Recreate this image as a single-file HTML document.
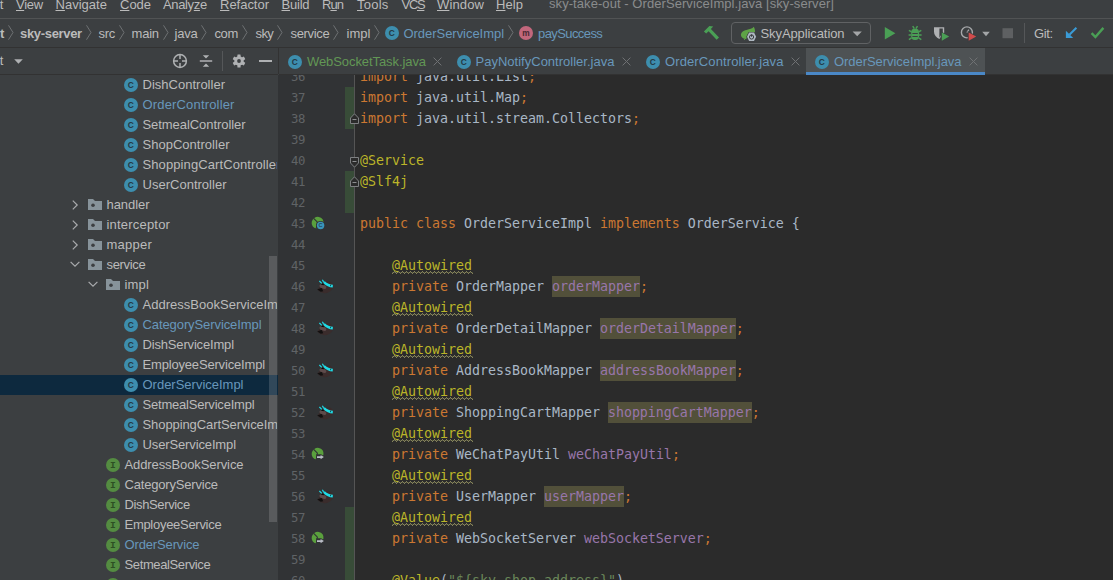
<!DOCTYPE html>
<html lang="en">
<head>
<meta charset="utf-8">
<title>sky-take-out - OrderServiceImpl.java [sky-server]</title>
<style>
*{box-sizing:border-box;margin:0;padding:0}
html,body{width:1113px;height:580px;overflow:hidden;background:#3c3f41}
body{position:relative;font-family:"Liberation Sans",sans-serif;font-size:13px;color:#bbbbbb}
.abs{position:absolute}
/* menu bar */
#menubar{left:0;top:0;width:1113px;height:18px;background:#3c3f41;overflow:hidden}
#menubar span{position:absolute;top:-4.5px;line-height:18px;font-size:13px;color:#bbbbbb;white-space:nowrap}
#menubar u{text-decoration:underline;text-underline-offset:1px}
#menubar .title{color:#8a8c8d;top:-5.4px}
#menuline{left:0;top:18px;width:1113px;height:1px;background:#515354}
/* nav bar */
#navbar{left:0;top:19px;width:1113px;height:28px;background:#3c3f41;overflow:hidden}
#navbar span{position:absolute;top:0.5px;line-height:28px;font-size:13px;color:#bbbbbb;white-space:nowrap}
#navbar .sep{color:#6e7073}
#navbar .blue{color:#6897bb}
#navline{left:0;top:47px;width:1113px;height:1px;background:#323232}
/* project tool window */
#proj{left:0;top:48px;width:278px;height:532px;background:#3c3f41;overflow:hidden}
#projhead{left:0;top:0;width:278px;height:26px}
#projline{left:0;top:26px;width:278px;height:1px;background:#323232}
#tree{left:0;top:27px;width:278px;height:505px;overflow:hidden}
.row{position:absolute;left:0;width:277px;overflow:hidden;height:20px;line-height:20px;white-space:nowrap;font-size:13px;color:#bbbbbb}
.row.sel{background:#0d293e}
.row span{position:absolute;top:0}
.row .b{color:#6897bb}
.ico{position:absolute;top:3px;width:14px;height:14px}
#vsplit{left:278px;top:48px;width:1px;height:26px;background:#323232}
#tscroll{left:269px;top:255px;width:8px;height:266px;background:#5b5d5f}
/* editor tabs */
#tabs{left:279px;top:48px;width:834px;height:27px;overflow:hidden;z-index:2}
#tabsline{left:279px;top:74px;width:834px;height:1px;background:#323232}
.tabt{top:1px;height:26px;line-height:26px;font-size:13px;white-space:nowrap}
/* editor */
#gutter{left:278px;top:75px;width:77px;height:505px;background:#313335;overflow:hidden}
#gutline{left:354px;top:75px;width:1px;height:505px;background:#555555}
#editor{left:355px;top:75px;width:758px;height:505px;background:#2b2b2b;overflow:hidden}
.ln{position:absolute;left:0;width:27px;margin-top:0.5px;text-align:right;height:21px;line-height:21px;font-family:"DejaVu Sans Mono","Liberation Mono",monospace;font-size:12.3px;letter-spacing:-0.4px;color:#606366}
.cl{position:absolute;left:5px;height:21px;line-height:21px;font-family:"DejaVu Sans Mono","Liberation Mono",monospace;font-size:13.29px;color:#a9b7c6;white-space:pre}
.k{color:#cc7832}
.a{color:#bbb529}
.f{color:#9876aa}
.s{color:#6a8759}
.hl{background:#52503a;display:inline-block;height:21px;vertical-align:top}
.wv{text-decoration:underline wavy #7f7a3c;text-decoration-thickness:1px;text-underline-offset:2px}
.chg{position:absolute;left:67px;width:9px;background:#384c38}
#m1{letter-spacing:-0.272px}#m2{letter-spacing:0.025px}#m3{letter-spacing:-0.027px}#m4{letter-spacing:-0.349px}#m5{letter-spacing:-0.019px}#m6{letter-spacing:-0.205px}#m7{letter-spacing:-0.944px}#m8{letter-spacing:0.253px}#m9{letter-spacing:-1.294px}#m10{letter-spacing:0.136px}#m11{letter-spacing:0.071px}#mtitle{letter-spacing:0.067px}#n1{letter-spacing:-0.322px}#n2{letter-spacing:-0.338px}#n3{letter-spacing:-0.196px}#n4{letter-spacing:-0.246px}#n5{letter-spacing:-0.425px}#n6{letter-spacing:-0.6px}#n7{letter-spacing:-0.337px}#n8{letter-spacing:0.045px}#n9{letter-spacing:-0.041px}#n10{letter-spacing:-0.589px}#tb1{letter-spacing:-0.095px}#tb2{letter-spacing:-0.353px}#t0{letter-spacing:0.009px}#t1{letter-spacing:0.166px}#t2{letter-spacing:-0.063px}#t3{letter-spacing:0.021px}#t4{letter-spacing:0.1px}#t5{letter-spacing:0.014px}#t6{letter-spacing:-0.058px}#t7{letter-spacing:0.198px}#t8{letter-spacing:0.259px}#t9{letter-spacing:-0.337px}#t10{letter-spacing:0.188px}#t11{letter-spacing:0.012px}#t12{letter-spacing:-0.09px}#t13{letter-spacing:-0.167px}#t14{letter-spacing:-0.174px}#t15{letter-spacing:-0.009px}#t16{letter-spacing:-0.206px}#t17{letter-spacing:-0.085px}#t18{letter-spacing:-0.128px}#t19{letter-spacing:-0.096px}#t20{letter-spacing:-0.18px}#t21{letter-spacing:-0.368px}#t22{letter-spacing:-0.287px}#t23{letter-spacing:-0.137px}#t24{letter-spacing:-0.374px}#t25{letter-spacing:-0.072px}#tab0{letter-spacing:-0.082px}#tab1{letter-spacing:0.011px}#tab2{letter-spacing:0.111px}#tab3{letter-spacing:-0.054px}
</style>
</head>
<body>
<div id="menubar" class="abs"><span id="m0" style="right:1109.6px;"><u>E</u>dit</span><span id="m1" style="left:16px;"><u>V</u>iew</span><span id="m2" style="left:55.5px;"><u>N</u>avigate</span><span id="m3" style="left:120px;"><u>C</u>ode</span><span id="m4" style="left:163px;">Analy<u>z</u>e</span><span id="m5" style="left:220px;"><u>R</u>efactor</span><span id="m6" style="left:281.5px;"><u>B</u>uild</span><span id="m7" style="left:322px;">R<u>u</u>n</span><span id="m8" style="left:357px;"><u>T</u>ools</span><span id="m9" style="left:401.5px;">VC<u>S</u></span><span id="m10" style="left:437px;"><u>W</u>indow</span><span id="m11" style="left:496px;"><u>H</u>elp</span><span id="mtitle" class="title" style="left:549px;">sky-take-out - OrderServiceImpl.java [sky-server]</span></div>
<div id="menuline" class="abs"></div>
<div id="navbar" class="abs"><span id="n0" style="right:1108.7px;font-weight:bold;">sky-take-out</span><svg class="abs" style="left:7.8px;top:6px" width="6" height="15" viewBox="0 0 6 15"><path d="M0.5 0.3L5 7.5L0.5 14.7" fill="none" stroke="#6e7173" stroke-width="1"/></svg><span id="n1" style="left:20px;font-weight:bold;">sky-server</span><svg class="abs" style="left:85.6px;top:6px" width="6" height="15" viewBox="0 0 6 15"><path d="M0.5 0.3L5 7.5L0.5 14.7" fill="none" stroke="#6e7173" stroke-width="1"/></svg><span id="n2" style="left:98.5px;">src</span><svg class="abs" style="left:118.6px;top:6px" width="6" height="15" viewBox="0 0 6 15"><path d="M0.5 0.3L5 7.5L0.5 14.7" fill="none" stroke="#6e7173" stroke-width="1"/></svg><span id="n3" style="left:131.5px;">main</span><svg class="abs" style="left:162.6px;top:6px" width="6" height="15" viewBox="0 0 6 15"><path d="M0.5 0.3L5 7.5L0.5 14.7" fill="none" stroke="#6e7173" stroke-width="1"/></svg><span id="n4" style="left:174.5px;">java</span><svg class="abs" style="left:201.1px;top:6px" width="6" height="15" viewBox="0 0 6 15"><path d="M0.5 0.3L5 7.5L0.5 14.7" fill="none" stroke="#6e7173" stroke-width="1"/></svg><span id="n5" style="left:214.5px;">com</span><svg class="abs" style="left:242.4px;top:6px" width="6" height="15" viewBox="0 0 6 15"><path d="M0.5 0.3L5 7.5L0.5 14.7" fill="none" stroke="#6e7173" stroke-width="1"/></svg><span id="n6" style="left:255.5px;">sky</span><svg class="abs" style="left:277.1px;top:6px" width="6" height="15" viewBox="0 0 6 15"><path d="M0.5 0.3L5 7.5L0.5 14.7" fill="none" stroke="#6e7173" stroke-width="1"/></svg><span id="n7" style="left:290.5px;">service</span><svg class="abs" style="left:333.2px;top:6px" width="6" height="15" viewBox="0 0 6 15"><path d="M0.5 0.3L5 7.5L0.5 14.7" fill="none" stroke="#6e7173" stroke-width="1"/></svg><span id="n8" style="left:346.5px;">impl</span><svg class="abs" style="left:374.3px;top:6px" width="6" height="15" viewBox="0 0 6 15"><path d="M0.5 0.3L5 7.5L0.5 14.7" fill="none" stroke="#6e7173" stroke-width="1"/></svg><svg class="abs" style="left:385px;top:6.5px" width="14" height="14" viewBox="0 0 14 14"><circle cx="7" cy="7" r="7" fill="#3d8eae"/><text x="6.9" y="9.9" text-anchor="middle" font-family="Liberation Sans, sans-serif" font-size="8.4" font-weight="bold" fill="#243945">C</text></svg><span id="n9" class="blue" style="left:403.5px;">OrderServiceImpl</span><svg class="abs" style="left:508px;top:6px" width="6" height="15" viewBox="0 0 6 15"><path d="M0.5 0.3L5 7.5L0.5 14.7" fill="none" stroke="#6e7173" stroke-width="1"/></svg><svg class="abs" style="left:519px;top:6.5px" width="14" height="14" viewBox="0 0 14 14"><circle cx="7" cy="7" r="7" fill="#c2677c"/><text x="6.9" y="9.9" text-anchor="middle" font-family="Liberation Sans, sans-serif" font-size="8.4" font-weight="bold" fill="#4a2a33">m</text></svg><span id="n10" class="blue" style="left:538px;">paySuccess</span><svg class="abs" style="left:690px;top:0" width="423" height="28" viewBox="690 19 423 28"><path d="M703.9 31.5L709.4 26L713.2 26.4L710.9 29.1L719 37.4L716.6 39.8L708.6 31.2L706.2 33.4z" fill="#4a9f55"/><rect x="731.5" y="22.5" width="139" height="21" rx="3.5" fill="none" stroke="#606264" stroke-width="1"/><path d="M741 35.6C740.5 32.6 743 30.7 746.5 29.9C749.8 29.2 752.3 28.9 753.8 26.8C755.3 29.4 755.3 32.2 754.6 33.4L748 33.6L746.6 38.4C744.8 39 743.4 38.5 742.4 37.7C741.6 37.1 741.2 36.5 741 35.6z" fill="#5ea347"/><path d="M746.4 37.8L744 39.7" stroke="#5ea347" stroke-width="1" fill="none"/><path d="M746.2 36.8L748.7 31.9H754.4L756.9 36.8L754.4 41.7H748.7z" fill="#3c3f41"/><path d="M747 36.8L749.1 32.6H754L756.1 36.8L754 41H749.1z" fill="#aeb8c2"/><circle cx="751.55" cy="37" r="2.1" fill="none" stroke="#3c3f41" stroke-width="1"/><path d="M751.55 34.2v2.6" stroke="#3c3f41" stroke-width="1.1"/><path d="M750.5 34.6h2.1" stroke="#aeb8c2" stroke-width="0.1"/><path d="M852.6 31.4h9.2L857.2 36.2z" fill="#a4a6a8"/><path d="M884.8 27L895.4 33.3L884.8 39.6z" fill="#4a9f55"/><rect x="911.2" y="28.8" width="7.8" height="11.2" rx="3.4" fill="#4a9f55"/><path d="M912.7 26.1l1.6 2.5M917.5 26.1l-1.6 2.5M908.9 30.4l2.6 1.5M921.3 30.4l-2.6 1.5M908.6 34.9h2.8M921.6 34.9h-2.8M908.9 39.6l2.6-1.7M921.3 39.6l-2.6-1.7" stroke="#4a9f55" stroke-width="1.5" fill="none"/><path d="M912.4 33.5h5.4M912.4 36.5h5.4" stroke="#3c3f41" stroke-width="1"/><path d="M934 27.2h10.2v5L939.4 39C936.2 37.6 934 35.2 934 31.8z" fill="#afb1b3"/><path d="M939.4 28.6h3.4v3.6l-3.4 5.6z" fill="#3c3f41"/><path d="M940.8 31.2l9.4 5.2-9.4 5.4z" fill="#3c3f41"/><path d="M941.8 32.6l7.4 4-7.4 4.2z" fill="#4a9f55"/><circle cx="966.9" cy="32.4" r="5.5" fill="none" stroke="#a6a8aa" stroke-width="1.4"/><path d="M966.9 32.6l2-3" stroke="#a6a8aa" stroke-width="1.2" fill="none"/><path d="M967.7 31l9.8 5.6-9.8 5.6z" fill="#3c3f41"/><path d="M968.7 32.6l7.5 4-7.5 4.2z" fill="#d04b4b"/><path d="M982.2 31.8h7.6L986 36.2z" fill="#a4a6a8"/><rect x="1002.5" y="28.2" width="10.5" height="10" fill="#5e6062"/><rect x="1024" y="23" width="1" height="20" fill="#555759"/><path d="M1076.4 27.7L1069.4 34.8" stroke="#3a9bd6" stroke-width="2" fill="none"/><path d="M1065.9 30.8V38H1073.2z" fill="#3a9bd6"/><path d="M1091.6 33.2L1095.4 37L1103.4 27.9" stroke="#4a9f55" stroke-width="2.4" fill="none"/></svg><span id="tb1" style="left:760.5px;">SkyApplication</span><span id="tb2" style="left:1034px;">Git:</span></div>
<div id="navline" class="abs"></div>
<div id="proj" class="abs">
  <div id="projhead" class="abs"><span id="ph0" style="right:274.6px;top:0;line-height:26px;position:absolute;font-size:13px;">Project</span><svg class="abs" style="left:13.5px;top:11px" width="9" height="5" viewBox="0 0 9 5"><path d="M0.2 0.2h8.6L4.5 4.8z" fill="#afb1b3"/></svg><svg class="abs" style="left:172px;top:5px" width="16" height="16" viewBox="0 0 16 16"><circle cx="8" cy="8" r="6.4" fill="none" stroke="#afb1b3" stroke-width="1.5"/><path d="M8 1.6V6M8 10V14.4M1.6 8H6M10 8H14.4" stroke="#afb1b3" stroke-width="1.5"/></svg><svg class="abs" style="left:199px;top:6px" width="14" height="14" viewBox="0 0 14 14"><path d="M0.8 7h12.4" stroke="#afb1b3" stroke-width="1.5"/><path d="M3.8 1.2h6.4L7 4.4z M3.8 12.8h6.4L7 9.6z" fill="#afb1b3"/></svg><div class="abs" style="left:222px;top:3px;width:1px;height:20px;background:#555759"></div><svg class="abs" style="left:232px;top:6px" width="14" height="14" viewBox="0 0 14 14"><g fill="#afb1b3"><circle cx="7" cy="7" r="4.7"/><rect x="5.4" y="0.6" width="3.2" height="3.4" rx="0.5" transform="rotate(0 7 7)"/><rect x="5.4" y="0.6" width="3.2" height="3.4" rx="0.5" transform="rotate(60 7 7)"/><rect x="5.4" y="0.6" width="3.2" height="3.4" rx="0.5" transform="rotate(120 7 7)"/><rect x="5.4" y="0.6" width="3.2" height="3.4" rx="0.5" transform="rotate(180 7 7)"/><rect x="5.4" y="0.6" width="3.2" height="3.4" rx="0.5" transform="rotate(240 7 7)"/><rect x="5.4" y="0.6" width="3.2" height="3.4" rx="0.5" transform="rotate(300 7 7)"/></g><circle cx="7" cy="7" r="1.9" fill="#3c3f41"/></svg><div class="abs" style="left:258.5px;top:11.7px;width:13px;height:2.6px;background:#afb1b3"></div></div>
  <div id="projline" class="abs"></div>
  <div id="tree" class="abs"><div class="abs" style="left:0;top:300px;width:278px;height:20px;background:#0d293e"></div><div class="abs" style="left:269px;top:180.5px;width:8px;height:266.5px;background:rgba(255,255,255,0.15)"></div><div class="row" style="top:0px"><svg class="abs" style="left:124px;top:3px" width="14" height="14" viewBox="0 0 14 14"><circle cx="7" cy="7" r="7" fill="#3d8eae"/><text x="6.9" y="9.9" text-anchor="middle" font-family="Liberation Sans, sans-serif" font-size="8.4" font-weight="bold" fill="#243945">C</text></svg><span id="t0" class="" style="left:142.5px">DishController</span></div><div class="row" style="top:20px"><svg class="abs" style="left:124px;top:3px" width="14" height="14" viewBox="0 0 14 14"><circle cx="7" cy="7" r="7" fill="#3d8eae"/><text x="6.9" y="9.9" text-anchor="middle" font-family="Liberation Sans, sans-serif" font-size="8.4" font-weight="bold" fill="#243945">C</text></svg><span id="t1" class="b" style="left:142.5px">OrderController</span></div><div class="row" style="top:40px"><svg class="abs" style="left:124px;top:3px" width="14" height="14" viewBox="0 0 14 14"><circle cx="7" cy="7" r="7" fill="#3d8eae"/><text x="6.9" y="9.9" text-anchor="middle" font-family="Liberation Sans, sans-serif" font-size="8.4" font-weight="bold" fill="#243945">C</text></svg><span id="t2" class="" style="left:142.5px">SetmealController</span></div><div class="row" style="top:60px"><svg class="abs" style="left:124px;top:3px" width="14" height="14" viewBox="0 0 14 14"><circle cx="7" cy="7" r="7" fill="#3d8eae"/><text x="6.9" y="9.9" text-anchor="middle" font-family="Liberation Sans, sans-serif" font-size="8.4" font-weight="bold" fill="#243945">C</text></svg><span id="t3" class="" style="left:142.5px">ShopController</span></div><div class="row" style="top:80px"><svg class="abs" style="left:124px;top:3px" width="14" height="14" viewBox="0 0 14 14"><circle cx="7" cy="7" r="7" fill="#3d8eae"/><text x="6.9" y="9.9" text-anchor="middle" font-family="Liberation Sans, sans-serif" font-size="8.4" font-weight="bold" fill="#243945">C</text></svg><span id="t4" class="" style="left:142.5px">ShoppingCartController</span></div><div class="row" style="top:100px"><svg class="abs" style="left:124px;top:3px" width="14" height="14" viewBox="0 0 14 14"><circle cx="7" cy="7" r="7" fill="#3d8eae"/><text x="6.9" y="9.9" text-anchor="middle" font-family="Liberation Sans, sans-serif" font-size="8.4" font-weight="bold" fill="#243945">C</text></svg><span id="t5" class="" style="left:142.5px">UserController</span></div><div class="row" style="top:120px"><svg class="abs" style="left:71.5px;top:4.5px" width="7" height="10" viewBox="0 0 7 10"><path d="M0.8 0.6L5.2 5L0.8 9.4" fill="none" stroke="#a9abad" stroke-width="1.2"/></svg><svg class="abs" style="left:88px;top:4px" width="14" height="11" viewBox="0 0 14 11"><path d="M0 0h5l2 2h7v9H0z" fill="#87939a"/><circle cx="5" cy="6.3" r="1.8" fill="#3c3f41"/></svg><span id="t6" class="" style="left:106.5px">handler</span></div><div class="row" style="top:140px"><svg class="abs" style="left:71.5px;top:4.5px" width="7" height="10" viewBox="0 0 7 10"><path d="M0.8 0.6L5.2 5L0.8 9.4" fill="none" stroke="#a9abad" stroke-width="1.2"/></svg><svg class="abs" style="left:88px;top:4px" width="14" height="11" viewBox="0 0 14 11"><path d="M0 0h5l2 2h7v9H0z" fill="#87939a"/><circle cx="5" cy="6.3" r="1.8" fill="#3c3f41"/></svg><span id="t7" class="" style="left:106.5px">interceptor</span></div><div class="row" style="top:160px"><svg class="abs" style="left:71.5px;top:4.5px" width="7" height="10" viewBox="0 0 7 10"><path d="M0.8 0.6L5.2 5L0.8 9.4" fill="none" stroke="#a9abad" stroke-width="1.2"/></svg><svg class="abs" style="left:88px;top:4px" width="14" height="11" viewBox="0 0 14 11"><path d="M0 0h5l2 2h7v9H0z" fill="#87939a"/><circle cx="5" cy="6.3" r="1.8" fill="#3c3f41"/></svg><span id="t8" class="" style="left:106.5px">mapper</span></div><div class="row" style="top:180px"><svg class="abs" style="left:69.5px;top:6px" width="10" height="7" viewBox="0 0 10 7"><path d="M0.6 0.8L5 5.2L9.4 0.8" fill="none" stroke="#a9abad" stroke-width="1.2"/></svg><svg class="abs" style="left:88px;top:4px" width="14" height="11" viewBox="0 0 14 11"><path d="M0 0h5l2 2h7v9H0z" fill="#87939a"/><circle cx="5" cy="6.3" r="1.8" fill="#3c3f41"/></svg><span id="t9" class="" style="left:106.5px">service</span></div><div class="row" style="top:200px"><svg class="abs" style="left:87.5px;top:6px" width="10" height="7" viewBox="0 0 10 7"><path d="M0.6 0.8L5 5.2L9.4 0.8" fill="none" stroke="#a9abad" stroke-width="1.2"/></svg><svg class="abs" style="left:106px;top:4px" width="14" height="11" viewBox="0 0 14 11"><path d="M0 0h5l2 2h7v9H0z" fill="#87939a"/><circle cx="5" cy="6.3" r="1.8" fill="#3c3f41"/></svg><span id="t10" class="" style="left:124.5px">impl</span></div><div class="row" style="top:220px"><svg class="abs" style="left:124px;top:3px" width="14" height="14" viewBox="0 0 14 14"><circle cx="7" cy="7" r="7" fill="#3d8eae"/><text x="6.9" y="9.9" text-anchor="middle" font-family="Liberation Sans, sans-serif" font-size="8.4" font-weight="bold" fill="#243945">C</text></svg><span id="t11" class="" style="left:142.5px">AddressBookServiceImpl</span></div><div class="row" style="top:240px"><svg class="abs" style="left:124px;top:3px" width="14" height="14" viewBox="0 0 14 14"><circle cx="7" cy="7" r="7" fill="#3d8eae"/><text x="6.9" y="9.9" text-anchor="middle" font-family="Liberation Sans, sans-serif" font-size="8.4" font-weight="bold" fill="#243945">C</text></svg><span id="t12" class="b" style="left:142.5px">CategoryServiceImpl</span></div><div class="row" style="top:260px"><svg class="abs" style="left:124px;top:3px" width="14" height="14" viewBox="0 0 14 14"><circle cx="7" cy="7" r="7" fill="#3d8eae"/><text x="6.9" y="9.9" text-anchor="middle" font-family="Liberation Sans, sans-serif" font-size="8.4" font-weight="bold" fill="#243945">C</text></svg><span id="t13" class="" style="left:142.5px">DishServiceImpl</span></div><div class="row" style="top:280px"><svg class="abs" style="left:124px;top:3px" width="14" height="14" viewBox="0 0 14 14"><circle cx="7" cy="7" r="7" fill="#3d8eae"/><text x="6.9" y="9.9" text-anchor="middle" font-family="Liberation Sans, sans-serif" font-size="8.4" font-weight="bold" fill="#243945">C</text></svg><span id="t14" class="" style="left:142.5px">EmployeeServiceImpl</span></div><div class="row" style="top:300px"><svg class="abs" style="left:124px;top:3px" width="14" height="14" viewBox="0 0 14 14"><circle cx="7" cy="7" r="7" fill="#3d8eae"/><text x="6.9" y="9.9" text-anchor="middle" font-family="Liberation Sans, sans-serif" font-size="8.4" font-weight="bold" fill="#243945">C</text></svg><span id="t15" class="b" style="left:142.5px">OrderServiceImpl</span></div><div class="row" style="top:320px"><svg class="abs" style="left:124px;top:3px" width="14" height="14" viewBox="0 0 14 14"><circle cx="7" cy="7" r="7" fill="#3d8eae"/><text x="6.9" y="9.9" text-anchor="middle" font-family="Liberation Sans, sans-serif" font-size="8.4" font-weight="bold" fill="#243945">C</text></svg><span id="t16" class="" style="left:142.5px">SetmealServiceImpl</span></div><div class="row" style="top:340px"><svg class="abs" style="left:124px;top:3px" width="14" height="14" viewBox="0 0 14 14"><circle cx="7" cy="7" r="7" fill="#3d8eae"/><text x="6.9" y="9.9" text-anchor="middle" font-family="Liberation Sans, sans-serif" font-size="8.4" font-weight="bold" fill="#243945">C</text></svg><span id="t17" class="" style="left:142.5px">ShoppingCartServiceImpl</span></div><div class="row" style="top:360px"><svg class="abs" style="left:124px;top:3px" width="14" height="14" viewBox="0 0 14 14"><circle cx="7" cy="7" r="7" fill="#3d8eae"/><text x="6.9" y="9.9" text-anchor="middle" font-family="Liberation Sans, sans-serif" font-size="8.4" font-weight="bold" fill="#243945">C</text></svg><span id="t18" class="" style="left:142.5px">UserServiceImpl</span></div><div class="row" style="top:380px"><svg class="abs" style="left:106px;top:3px" width="14" height="14" viewBox="0 0 14 14"><circle cx="7" cy="7" r="7" fill="#548c41"/><text x="7" y="9.9" text-anchor="middle" font-family="Liberation Mono, monospace" font-size="9.6" font-weight="bold" fill="#2c4f24">I</text></svg><span id="t19" class="" style="left:124.5px">AddressBookService</span></div><div class="row" style="top:400px"><svg class="abs" style="left:106px;top:3px" width="14" height="14" viewBox="0 0 14 14"><circle cx="7" cy="7" r="7" fill="#548c41"/><text x="7" y="9.9" text-anchor="middle" font-family="Liberation Mono, monospace" font-size="9.6" font-weight="bold" fill="#2c4f24">I</text></svg><span id="t20" class="" style="left:124.5px">CategoryService</span></div><div class="row" style="top:420px"><svg class="abs" style="left:106px;top:3px" width="14" height="14" viewBox="0 0 14 14"><circle cx="7" cy="7" r="7" fill="#548c41"/><text x="7" y="9.9" text-anchor="middle" font-family="Liberation Mono, monospace" font-size="9.6" font-weight="bold" fill="#2c4f24">I</text></svg><span id="t21" class="" style="left:124.5px">DishService</span></div><div class="row" style="top:440px"><svg class="abs" style="left:106px;top:3px" width="14" height="14" viewBox="0 0 14 14"><circle cx="7" cy="7" r="7" fill="#548c41"/><text x="7" y="9.9" text-anchor="middle" font-family="Liberation Mono, monospace" font-size="9.6" font-weight="bold" fill="#2c4f24">I</text></svg><span id="t22" class="" style="left:124.5px">EmployeeService</span></div><div class="row" style="top:460px"><svg class="abs" style="left:106px;top:3px" width="14" height="14" viewBox="0 0 14 14"><circle cx="7" cy="7" r="7" fill="#548c41"/><text x="7" y="9.9" text-anchor="middle" font-family="Liberation Mono, monospace" font-size="9.6" font-weight="bold" fill="#2c4f24">I</text></svg><span id="t23" class="b" style="left:124.5px">OrderService</span></div><div class="row" style="top:480px"><svg class="abs" style="left:106px;top:3px" width="14" height="14" viewBox="0 0 14 14"><circle cx="7" cy="7" r="7" fill="#548c41"/><text x="7" y="9.9" text-anchor="middle" font-family="Liberation Mono, monospace" font-size="9.6" font-weight="bold" fill="#2c4f24">I</text></svg><span id="t24" class="" style="left:124.5px">SetmealService</span></div><div class="row" style="top:500px"><svg class="abs" style="left:106px;top:3px" width="14" height="14" viewBox="0 0 14 14"><circle cx="7" cy="7" r="7" fill="#548c41"/><text x="7" y="9.9" text-anchor="middle" font-family="Liberation Mono, monospace" font-size="9.6" font-weight="bold" fill="#2c4f24">I</text></svg><span id="t25" class="" style="left:124.5px">ShoppingCartService</span></div></div>
</div>
<div id="vsplit" class="abs"></div>
<div id="tabs" class="abs"><svg class="abs" style="left:9px;top:7px" width="14" height="14" viewBox="0 0 14 14"><circle cx="7" cy="7" r="7" fill="#3d8eae"/><text x="6.9" y="9.9" text-anchor="middle" font-family="Liberation Sans, sans-serif" font-size="8.4" font-weight="bold" fill="#243945">C</text></svg><span id="tab0" class="abs tabt" style="left:28px;color:#629755">WebSocketTask.java</span><svg class="abs" style="left:154px;top:9px" width="9" height="9" viewBox="0 0 9 9"><path d="M0.6 0.6L8.4 8.4M8.4 0.6L0.6 8.4" stroke="#707274" stroke-width="1"/></svg><svg class="abs" style="left:178px;top:7px" width="14" height="14" viewBox="0 0 14 14"><circle cx="7" cy="7" r="7" fill="#3d8eae"/><text x="6.9" y="9.9" text-anchor="middle" font-family="Liberation Sans, sans-serif" font-size="8.4" font-weight="bold" fill="#243945">C</text></svg><span id="tab1" class="abs tabt" style="left:196.5px;color:#6897bb">PayNotifyController.java</span><svg class="abs" style="left:342.5px;top:9px" width="9" height="9" viewBox="0 0 9 9"><path d="M0.6 0.6L8.4 8.4M8.4 0.6L0.6 8.4" stroke="#707274" stroke-width="1"/></svg><svg class="abs" style="left:367px;top:7px" width="14" height="14" viewBox="0 0 14 14"><circle cx="7" cy="7" r="7" fill="#3d8eae"/><text x="6.9" y="9.9" text-anchor="middle" font-family="Liberation Sans, sans-serif" font-size="8.4" font-weight="bold" fill="#243945">C</text></svg><span id="tab2" class="abs tabt" style="left:386px;color:#6897bb">OrderController.java</span><svg class="abs" style="left:511.5px;top:9px" width="9" height="9" viewBox="0 0 9 9"><path d="M0.6 0.6L8.4 8.4M8.4 0.6L0.6 8.4" stroke="#707274" stroke-width="1"/></svg><div class="abs" style="left:527px;top:0;width:179px;height:26px;background:#4e5254"></div><div class="abs" style="left:527px;top:24px;width:179px;height:3px;background:#4a88c7"></div><svg class="abs" style="left:536px;top:7px" width="14" height="14" viewBox="0 0 14 14"><circle cx="7" cy="7" r="7" fill="#3d8eae"/><text x="6.9" y="9.9" text-anchor="middle" font-family="Liberation Sans, sans-serif" font-size="8.4" font-weight="bold" fill="#243945">C</text></svg><span id="tab3" class="abs tabt" style="left:555px;color:#6897bb">OrderServiceImpl.java</span><svg class="abs" style="left:689.5px;top:9px" width="9" height="9" viewBox="0 0 9 9"><path d="M0.6 0.6L8.4 8.4M8.4 0.6L0.6 8.4" stroke="#707274" stroke-width="1"/></svg></div>
<div id="tabsline" class="abs"></div>
<div id="gutter" class="abs"><div class="ln" style="top:-9px">36</div><div class="ln" style="top:12px">37</div><div class="ln" style="top:33px">38</div><div class="ln" style="top:54px">39</div><div class="ln" style="top:75px">40</div><div class="ln" style="top:96px">41</div><div class="ln" style="top:117px">42</div><div class="ln" style="top:138px">43</div><div class="ln" style="top:159px">44</div><div class="ln" style="top:180px">45</div><div class="ln" style="top:201px">46</div><div class="ln" style="top:222px">47</div><div class="ln" style="top:243px">48</div><div class="ln" style="top:264px">49</div><div class="ln" style="top:285px">50</div><div class="ln" style="top:306px">51</div><div class="ln" style="top:327px">52</div><div class="ln" style="top:348px">53</div><div class="ln" style="top:369px">54</div><div class="ln" style="top:390px">55</div><div class="ln" style="top:411px">56</div><div class="ln" style="top:432px">57</div><div class="ln" style="top:453px">58</div><div class="ln" style="top:474px">59</div><div class="ln" style="top:495px">60</div><div class="chg" style="top:12px;height:42px"></div><div class="chg" style="top:96px;height:42px"></div><div class="chg" style="top:432px;height:105px"></div></div>
<div id="gutline" class="abs"></div>
<div id="editor" class="abs"><div class="cl" style="top:-9px"><span class="k">import</span> java.util.List<span class="k">;</span></div><div class="cl" style="top:12px"><span class="k">import</span> java.util.Map<span class="k">;</span></div><div class="cl" style="top:33px"><span class="k">import</span> java.util.stream.Collectors<span class="k">;</span></div><div class="cl" style="top:54px"></div><div class="cl" style="top:75px"><span class="a">@Service</span></div><div class="cl" style="top:96px"><span class="a">@Slf4j</span></div><div class="cl" style="top:117px"></div><div class="cl" style="top:138px"><span class="k">public class</span> OrderServiceImpl <span class="k">implements</span> OrderService {</div><div class="cl" style="top:159px"></div><div class="cl" style="top:180px">    <span class="a">@Autowired</span></div><div class="cl" style="top:201px">    <span class="k">private</span> OrderMapper <span class="f hl">orderMapper</span><span class="k">;</span></div><div class="cl" style="top:222px">    <span class="a">@Autowired</span></div><div class="cl" style="top:243px">    <span class="k">private</span> OrderDetailMapper <span class="f hl">orderDetailMapper</span><span class="k">;</span></div><div class="cl" style="top:264px">    <span class="a">@Autowired</span></div><div class="cl" style="top:285px">    <span class="k">private</span> AddressBookMapper <span class="f hl">addressBookMapper</span><span class="k">;</span></div><div class="cl" style="top:306px">    <span class="a">@Autowired</span></div><div class="cl" style="top:327px">    <span class="k">private</span> ShoppingCartMapper <span class="f hl">shoppingCartMapper</span><span class="k">;</span></div><div class="cl" style="top:348px">    <span class="a">@Autowired</span></div><div class="cl" style="top:369px">    <span class="k">private</span> WeChatPayUtil <span class="f">weChatPayUtil</span><span class="k">;</span></div><div class="cl" style="top:390px">    <span class="a">@Autowired</span></div><div class="cl" style="top:411px">    <span class="k">private</span> UserMapper <span class="f hl">userMapper</span><span class="k">;</span></div><div class="cl" style="top:432px">    <span class="a">@Autowired</span></div><div class="cl" style="top:453px">    <span class="k">private</span> WebSocketServer <span class="f">webSocketServer</span><span class="k">;</span></div><div class="cl" style="top:474px"></div><div class="cl" style="top:495px">    <span class="a">@Value</span>(<span class="s">"${sky.shop.address}"</span>)</div></div>
<svg class="abs" style="left:350px;top:113px" width="10" height="11" viewBox="0 0 10 11"><path d="M0.5 5L4.5 0.8L8.5 5V10.5H0.5z" fill="#2b2b2b" stroke="#7e8082" stroke-width="1"/><path d="M2.5 6.5H6.5" stroke="#8c8e90" stroke-width="1"/></svg><svg class="abs" style="left:350px;top:156.5px" width="10" height="11" viewBox="0 0 10 11"><path d="M0.5 0.5H8.5V6L4.5 10.2L0.5 6z" fill="#2b2b2b" stroke="#7e8082" stroke-width="1"/><path d="M2.5 4.5H6.5" stroke="#8c8e90" stroke-width="1"/></svg><svg class="abs" style="left:350px;top:176px" width="10" height="11" viewBox="0 0 10 11"><path d="M0.5 5L4.5 0.8L8.5 5V10.5H0.5z" fill="#2b2b2b" stroke="#7e8082" stroke-width="1"/><path d="M2.5 6.5H6.5" stroke="#8c8e90" stroke-width="1"/></svg><svg class="abs" style="left:305px;top:75px" width="45" height="505" viewBox="305 75 45 505"><g transform="translate(0 213)"><ellipse cx="317.6" cy="9.7" rx="6.1" ry="5.7" transform="rotate(-35 317.6 9.7)" fill="#5aa03d"/><path d="M313.7 5.3L317.4 9.2L316.2 15.8" stroke="#313335" stroke-width="1.1" fill="none"/></g><g transform="translate(0 213)"><circle cx="320.6" cy="12.5" r="4.6" fill="#313335"/><circle cx="320.6" cy="12.5" r="3.7" fill="#3a95ba"/><text x="320.6" y="14.3" text-anchor="middle" font-family="Liberation Sans, sans-serif" font-size="5.6" font-weight="bold" fill="#27485a">C</text></g><g transform="translate(0 276)"><path d="M317.4 13.6C319.4 11 321.4 7.8 325.6 5.8C329.8 3.8 333.4 6.6 332.9 10.6C332.4 14.8 328.6 17.4 324.4 17.2C321.2 17.1 319.2 15.9 317.4 13.6z" fill="#3a2c2c"/><path d="M317.2 13.6l4.6-1.8 1.4 3.4-2.4.6z" fill="#121010"/><ellipse cx="322.9" cy="10.6" rx="3.6" ry="1.9" transform="rotate(22 322.9 10.6)" fill="#5e4b4b"/><path d="M321.4 8.1l2.4.5" stroke="#0c0b0b" stroke-width="1.2"/><path d="M323.4 6.9C326 9.8 329.4 11.3 332.7 11.6L332.9 8.7C330 8.4 327 7.5 324.8 5.2z" fill="#1fdbe6"/><path d="M319.4 5l2.4 2.4M322.4 3.8l1 1.8 1.6 1.4" stroke="#1fdbe6" stroke-width="1.2" fill="none"/><ellipse cx="330.6" cy="9.6" rx="0.5" ry="0.8" fill="#16363a"/></g><g transform="translate(0 318)"><path d="M317.4 13.6C319.4 11 321.4 7.8 325.6 5.8C329.8 3.8 333.4 6.6 332.9 10.6C332.4 14.8 328.6 17.4 324.4 17.2C321.2 17.1 319.2 15.9 317.4 13.6z" fill="#3a2c2c"/><path d="M317.2 13.6l4.6-1.8 1.4 3.4-2.4.6z" fill="#121010"/><ellipse cx="322.9" cy="10.6" rx="3.6" ry="1.9" transform="rotate(22 322.9 10.6)" fill="#5e4b4b"/><path d="M321.4 8.1l2.4.5" stroke="#0c0b0b" stroke-width="1.2"/><path d="M323.4 6.9C326 9.8 329.4 11.3 332.7 11.6L332.9 8.7C330 8.4 327 7.5 324.8 5.2z" fill="#1fdbe6"/><path d="M319.4 5l2.4 2.4M322.4 3.8l1 1.8 1.6 1.4" stroke="#1fdbe6" stroke-width="1.2" fill="none"/><ellipse cx="330.6" cy="9.6" rx="0.5" ry="0.8" fill="#16363a"/></g><g transform="translate(0 360)"><path d="M317.4 13.6C319.4 11 321.4 7.8 325.6 5.8C329.8 3.8 333.4 6.6 332.9 10.6C332.4 14.8 328.6 17.4 324.4 17.2C321.2 17.1 319.2 15.9 317.4 13.6z" fill="#3a2c2c"/><path d="M317.2 13.6l4.6-1.8 1.4 3.4-2.4.6z" fill="#121010"/><ellipse cx="322.9" cy="10.6" rx="3.6" ry="1.9" transform="rotate(22 322.9 10.6)" fill="#5e4b4b"/><path d="M321.4 8.1l2.4.5" stroke="#0c0b0b" stroke-width="1.2"/><path d="M323.4 6.9C326 9.8 329.4 11.3 332.7 11.6L332.9 8.7C330 8.4 327 7.5 324.8 5.2z" fill="#1fdbe6"/><path d="M319.4 5l2.4 2.4M322.4 3.8l1 1.8 1.6 1.4" stroke="#1fdbe6" stroke-width="1.2" fill="none"/><ellipse cx="330.6" cy="9.6" rx="0.5" ry="0.8" fill="#16363a"/></g><g transform="translate(0 402)"><path d="M317.4 13.6C319.4 11 321.4 7.8 325.6 5.8C329.8 3.8 333.4 6.6 332.9 10.6C332.4 14.8 328.6 17.4 324.4 17.2C321.2 17.1 319.2 15.9 317.4 13.6z" fill="#3a2c2c"/><path d="M317.2 13.6l4.6-1.8 1.4 3.4-2.4.6z" fill="#121010"/><ellipse cx="322.9" cy="10.6" rx="3.6" ry="1.9" transform="rotate(22 322.9 10.6)" fill="#5e4b4b"/><path d="M321.4 8.1l2.4.5" stroke="#0c0b0b" stroke-width="1.2"/><path d="M323.4 6.9C326 9.8 329.4 11.3 332.7 11.6L332.9 8.7C330 8.4 327 7.5 324.8 5.2z" fill="#1fdbe6"/><path d="M319.4 5l2.4 2.4M322.4 3.8l1 1.8 1.6 1.4" stroke="#1fdbe6" stroke-width="1.2" fill="none"/><ellipse cx="330.6" cy="9.6" rx="0.5" ry="0.8" fill="#16363a"/></g><g transform="translate(0 486)"><path d="M317.4 13.6C319.4 11 321.4 7.8 325.6 5.8C329.8 3.8 333.4 6.6 332.9 10.6C332.4 14.8 328.6 17.4 324.4 17.2C321.2 17.1 319.2 15.9 317.4 13.6z" fill="#3a2c2c"/><path d="M317.2 13.6l4.6-1.8 1.4 3.4-2.4.6z" fill="#121010"/><ellipse cx="322.9" cy="10.6" rx="3.6" ry="1.9" transform="rotate(22 322.9 10.6)" fill="#5e4b4b"/><path d="M321.4 8.1l2.4.5" stroke="#0c0b0b" stroke-width="1.2"/><path d="M323.4 6.9C326 9.8 329.4 11.3 332.7 11.6L332.9 8.7C330 8.4 327 7.5 324.8 5.2z" fill="#1fdbe6"/><path d="M319.4 5l2.4 2.4M322.4 3.8l1 1.8 1.6 1.4" stroke="#1fdbe6" stroke-width="1.2" fill="none"/><ellipse cx="330.6" cy="9.6" rx="0.5" ry="0.8" fill="#16363a"/></g><g transform="translate(0 444)"><ellipse cx="317.6" cy="9.7" rx="6.1" ry="5.7" transform="rotate(-35 317.6 9.7)" fill="#5aa03d"/><path d="M313.7 5.3L317.4 9.2L316.2 15.8" stroke="#313335" stroke-width="1.1" fill="none"/></g><g transform="translate(0 444)"><path d="M316.2 10.2h5l3.6 2.9v1l-3.6 2.9h-5z" fill="#313335"/><path d="M317 12.2h3.6v-1.3l3.3 2.2-3.3 2.2v-1.3H317z" fill="#b9bdc6"/></g><g transform="translate(0 528)"><ellipse cx="317.6" cy="9.7" rx="6.1" ry="5.7" transform="rotate(-35 317.6 9.7)" fill="#5aa03d"/><path d="M313.7 5.3L317.4 9.2L316.2 15.8" stroke="#313335" stroke-width="1.1" fill="none"/></g><g transform="translate(0 528)"><path d="M316.2 10.2h5l3.6 2.9v1l-3.6 2.9h-5z" fill="#313335"/><path d="M317 12.2h3.6v-1.3l3.3 2.2-3.3 2.2v-1.3H317z" fill="#b9bdc6"/></g></svg><svg class="abs" style="left:355px;top:75px" width="200" height="505" viewBox="355 75 200 505" shape-rendering="crispEdges"><defs><pattern id="wv" x="392" y="271" width="4" height="42" patternUnits="userSpaceOnUse"><rect x="0" y="2" width="1" height="1" fill="#85845a"/><rect x="1" y="1" width="1" height="1" fill="#85845a"/><rect x="2" y="0" width="1" height="1" fill="#85845a"/><rect x="3" y="1" width="1" height="1" fill="#85845a"/><rect x="0.0" y="1" width="1" height="1" fill="#85845a" opacity="0.35"/><rect x="2" y="1" width="1" height="1" fill="#85845a" opacity="0.35"/></pattern></defs><rect x="392" y="271" width="81" height="255" fill="url(#wv)"/></svg>
</body>
</html>
